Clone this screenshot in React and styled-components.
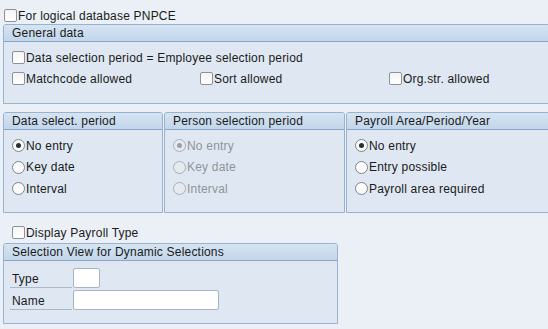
import React from "react";
import styled, { createGlobalStyle } from "styled-components";

const GlobalStyle = createGlobalStyle`
  html, body {
    margin: 0;
    padding: 0;
    background: #eaf0f6;
    overflow: hidden;
  }
  body {
    font-family: "Liberation Sans", Arial, sans-serif;
    font-size: 12px;
    letter-spacing: 0.2px;
    color: #1a1a1a;
  }
`;

const Page = styled.div`
  width: 548px;
  height: 329px;
  padding: 7px 0 0 3px;
  box-sizing: border-box;
  display: flex;
  flex-direction: column;
`;

const Group = styled.div`
  box-sizing: border-box;
  width: ${(p) => p.$w};
  height: ${(p) => p.$h};
  margin-top: ${(p) => p.$mt || "0"};
  border: 1px solid #98b2cf;
  border-radius: 3px 3px 0 0;
  background: #dfe8f2;
  flex-shrink: 0;
  overflow: hidden;
`;

const GroupTitle = styled.div`
  height: 16px;
  line-height: 16px;
  padding-left: 8px;
  background: linear-gradient(#d6e4f2, #c2d6ea);
  border-bottom: 1px solid #8aa6c6;
  white-space: nowrap;
`;

const GroupBody = styled.div`
  padding: ${(p) => p.$pad || "5px 0 0 8px"};
  display: flex;
  flex-direction: column;
`;

const Row = styled.div`
  height: ${(p) => p.$h || "21px"};
  display: grid;
  grid-template-columns: ${(p) => p.$cols || "1fr"};
  align-items: center;
`;

const Option = styled.label`
  display: flex;
  align-items: center;
  gap: 1px;
  white-space: nowrap;
  color: ${(p) => (p.$disabled ? "#8e949a" : "#1a1a1a")};
`;

const Box = styled.span`
  width: 11px;
  height: 11px;
  border: 1px solid #8c9299;
  border-radius: 2px;
  background: linear-gradient(#f4f4f4, #ffffff);
  flex-shrink: 0;
`;

const Radio = styled.span`
  box-sizing: border-box;
  width: 13px;
  height: 13px;
  border: 1px solid ${(p) => (p.$disabled ? "#a9aeb4" : "#7d848b")};
  border-radius: 50%;
  background: ${(p) => (p.$disabled ? "#e6ebf0" : "#fbfbfb")};
  display: flex;
  align-items: center;
  justify-content: center;
  flex-shrink: 0;
  &::after {
    content: "";
    display: ${(p) => (p.$on ? "block" : "none")};
    width: 5px;
    height: 5px;
    border-radius: 50%;
    background: ${(p) => (p.$disabled ? "#9aa0a6" : "#2b2f33")};
  }
`;

const TopCheck = styled.div`
  height: 17px;
  display: flex;
  align-items: center;
  padding-left: 1px;
`;

const Boxes = styled.div`
  display: flex;
  gap: 1px;
  margin-top: 8px;
`;

const MidCheck = styled.div`
  height: 17px;
  margin-top: 11px;
  display: flex;
  align-items: center;
  padding-left: 9px;
`;

const FieldRow = styled.div`
  display: flex;
  align-items: center;
  height: 22px;
  padding-left: 6px;
`;

const FieldLabel = styled.div`
  width: 62px;
  height: 19px;
  line-height: 20px;
  padding-left: 2px;
  box-sizing: border-box;
  border-bottom: 1px solid #a9b9ca;
`;

const Input = styled.div`
  box-sizing: border-box;
  width: ${(p) => p.$w};
  height: 20px;
  margin-left: 1px;
  background: #fff;
  border: 1px solid #a6b4c3;
  border-radius: 2px;
`;

const CheckOpt = ({ label }) => (
  <Option>
    <Box />
    {label}
  </Option>
);

const RadioOpt = ({ label, on, disabled }) => (
  <Option $disabled={disabled}>
    <Radio $on={on} $disabled={disabled} />
    {label}
  </Option>
);

const RadioGroup = ({ title, w, options, disabled }) => (
  <Group $w={w} $h="101px">
    <GroupTitle>{title}</GroupTitle>
    <GroupBody $pad="5px 0 0 8px">
      {options.map((o, i) => (
        <Row key={o} $h="21.5px">
          <RadioOpt label={o} on={i === 0} disabled={disabled} />
        </Row>
      ))}
    </GroupBody>
  </Group>
);

export default function App() {
  return (
    <>
      <GlobalStyle />
      <Page>
        <TopCheck>
          <CheckOpt label="For logical database PNPCE" />
        </TopCheck>
        <Group $w="560px" $h="80px">
          <GroupTitle>General data</GroupTitle>
          <GroupBody>
            <Row>
              <CheckOpt label="Data selection period = Employee selection period" />
            </Row>
            <Row $cols="188px 189px 1fr">
              <CheckOpt label="Matchcode allowed" />
              <CheckOpt label="Sort allowed" />
              <CheckOpt label="Org.str. allowed" />
            </Row>
          </GroupBody>
        </Group>
        <Boxes>
          <RadioGroup
            title="Data select. period"
            w="160px"
            options={["No entry", "Key date", "Interval"]}
          />
          <RadioGroup
            title="Person selection period"
            w="181px"
            disabled
            options={["No entry", "Key date", "Interval"]}
          />
          <RadioGroup
            title="Payroll Area/Period/Year"
            w="210px"
            options={["No entry", "Entry possible", "Payroll area required"]}
          />
        </Boxes>
        <MidCheck>
          <CheckOpt label="Display Payroll Type" />
        </MidCheck>
        <Group $w="335px" $h="81px" $mt="2px">
          <GroupTitle>Selection View for Dynamic Selections</GroupTitle>
          <GroupBody $pad="6px 0 0 0">
            <FieldRow>
              <FieldLabel>Type</FieldLabel>
              <Input $w="27px" />
            </FieldRow>
            <FieldRow>
              <FieldLabel>Name</FieldLabel>
              <Input $w="146px" />
            </FieldRow>
          </GroupBody>
        </Group>
      </Page>
    </>
  );
}
